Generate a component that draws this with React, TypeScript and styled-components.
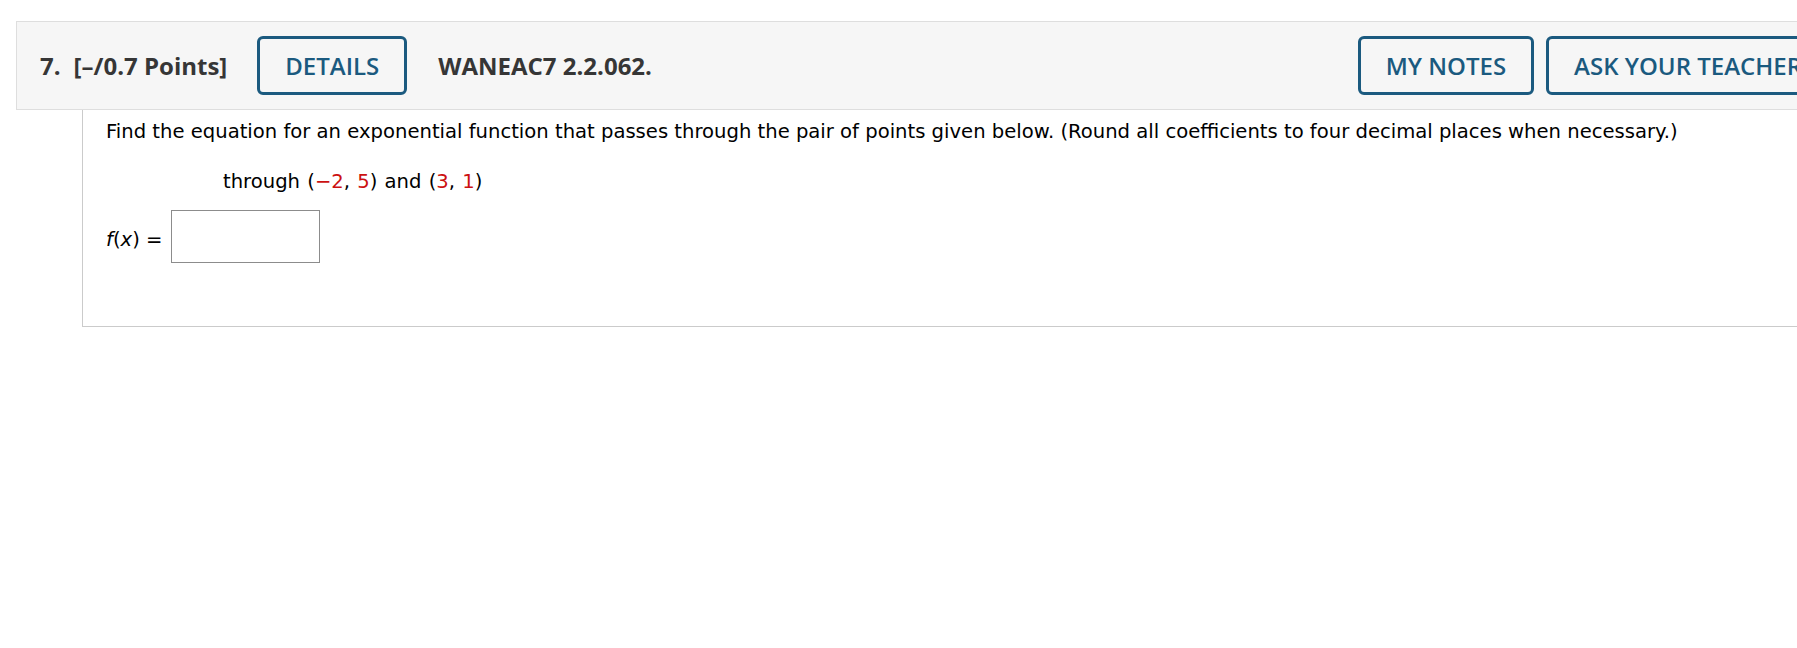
import React from 'react';
import styled, { createGlobalStyle } from 'styled-components';

const GlobalStyle = createGlobalStyle`
  html, body {
    margin: 0;
    padding: 0;
    background: #ffffff;
    overflow: hidden;
  }
  body {
    font-family: 'DejaVu Sans', Verdana, sans-serif;
    color: #000;
  }
`;

const brand = '#1b5a7f';

const Page = styled.div`
  width: 1847px;
  padding: 21px 0 0 16px;
  box-sizing: border-box;
`;

const Header = styled.div`
  display: flex;
  align-items: center;
  box-sizing: border-box;
  height: 89px;
  padding: 0 16px 0 23px;
  background: #f6f6f6;
  border: 1px solid #dedede;
  font-family: 'Open Sans', 'Liberation Sans', sans-serif;
  font-size: 24px;
  color: #363636;
`;

const Title = styled.div`
  display: flex;
  gap: 13px;
  font-weight: 700;
  margin-right: 30px;
`;

const Code = styled.span`
  font-weight: 700;
  margin-left: 31px;
`;

const Actions = styled.div`
  display: flex;
  gap: 12px;
  margin-left: auto;
  flex-shrink: 0;
`;

const OutlineButton = styled.button`
  box-sizing: border-box;
  height: 59px;
  padding: 0 25px;
  border: 3px solid ${brand};
  border-radius: 6px;
  background: transparent;
  color: ${brand};
  font-family: 'Open Sans', 'Liberation Sans', sans-serif;
  font-size: 24px;
  font-weight: 600;
  white-space: nowrap;
  flex-shrink: 0;
  cursor: pointer;
`;

const Body = styled.div`
  margin-left: 66px;
  padding: 9px 0 63px 23px;
  border-left: 1px solid #cbcbcb;
  border-bottom: 1px solid #cbcbcb;
  font-size: 19.6px;
  line-height: 26.6px;
`;

const Prompt = styled.p`
  margin: 0;
  white-space: nowrap;
`;

const Points = styled.p`
  margin: 23px 0 0 117px;
  word-spacing: 1px;
`;

const Red = styled.span`
  color: #cc1111;
`;

const AnswerRow = styled.div`
  display: flex;
  align-items: center;
  gap: 9px;
  margin-top: 15px;
`;

const Label = styled.span`
  margin-top: 7px;
  i {
    font-style: italic;
  }
`;

const AnswerBox = styled.input`
  box-sizing: border-box;
  width: 149px;
  height: 53px;
  border: 1px solid #8c8c8c;
  background: #fff;
  outline: none;
`;

export default function App() {
  return (
    <Page>
      <GlobalStyle />
      <Header>
        <Title>
          <span>7.</span>
          <span>[–/0.7 Points]</span>
        </Title>
        <OutlineButton>DETAILS</OutlineButton>
        <Code>WANEAC7 2.2.062.</Code>
        <Actions>
          <OutlineButton>MY NOTES</OutlineButton>
          <OutlineButton>ASK YOUR TEACHER</OutlineButton>
        </Actions>
      </Header>
      <Body>
        <Prompt>
          Find the equation for an exponential function that passes through the pair of points given below. (Round all
          coefficients to four decimal places when necessary.)
        </Prompt>
        <Points>
          through (<Red>−2</Red>, <Red>5</Red>) and (<Red>3</Red>, <Red>1</Red>)
        </Points>
        <AnswerRow>
          <Label>
            <i>f</i>(<i>x</i>) =
          </Label>
          <AnswerBox type="text" aria-label="f(x)" />
        </AnswerRow>
      </Body>
    </Page>
  );
}
